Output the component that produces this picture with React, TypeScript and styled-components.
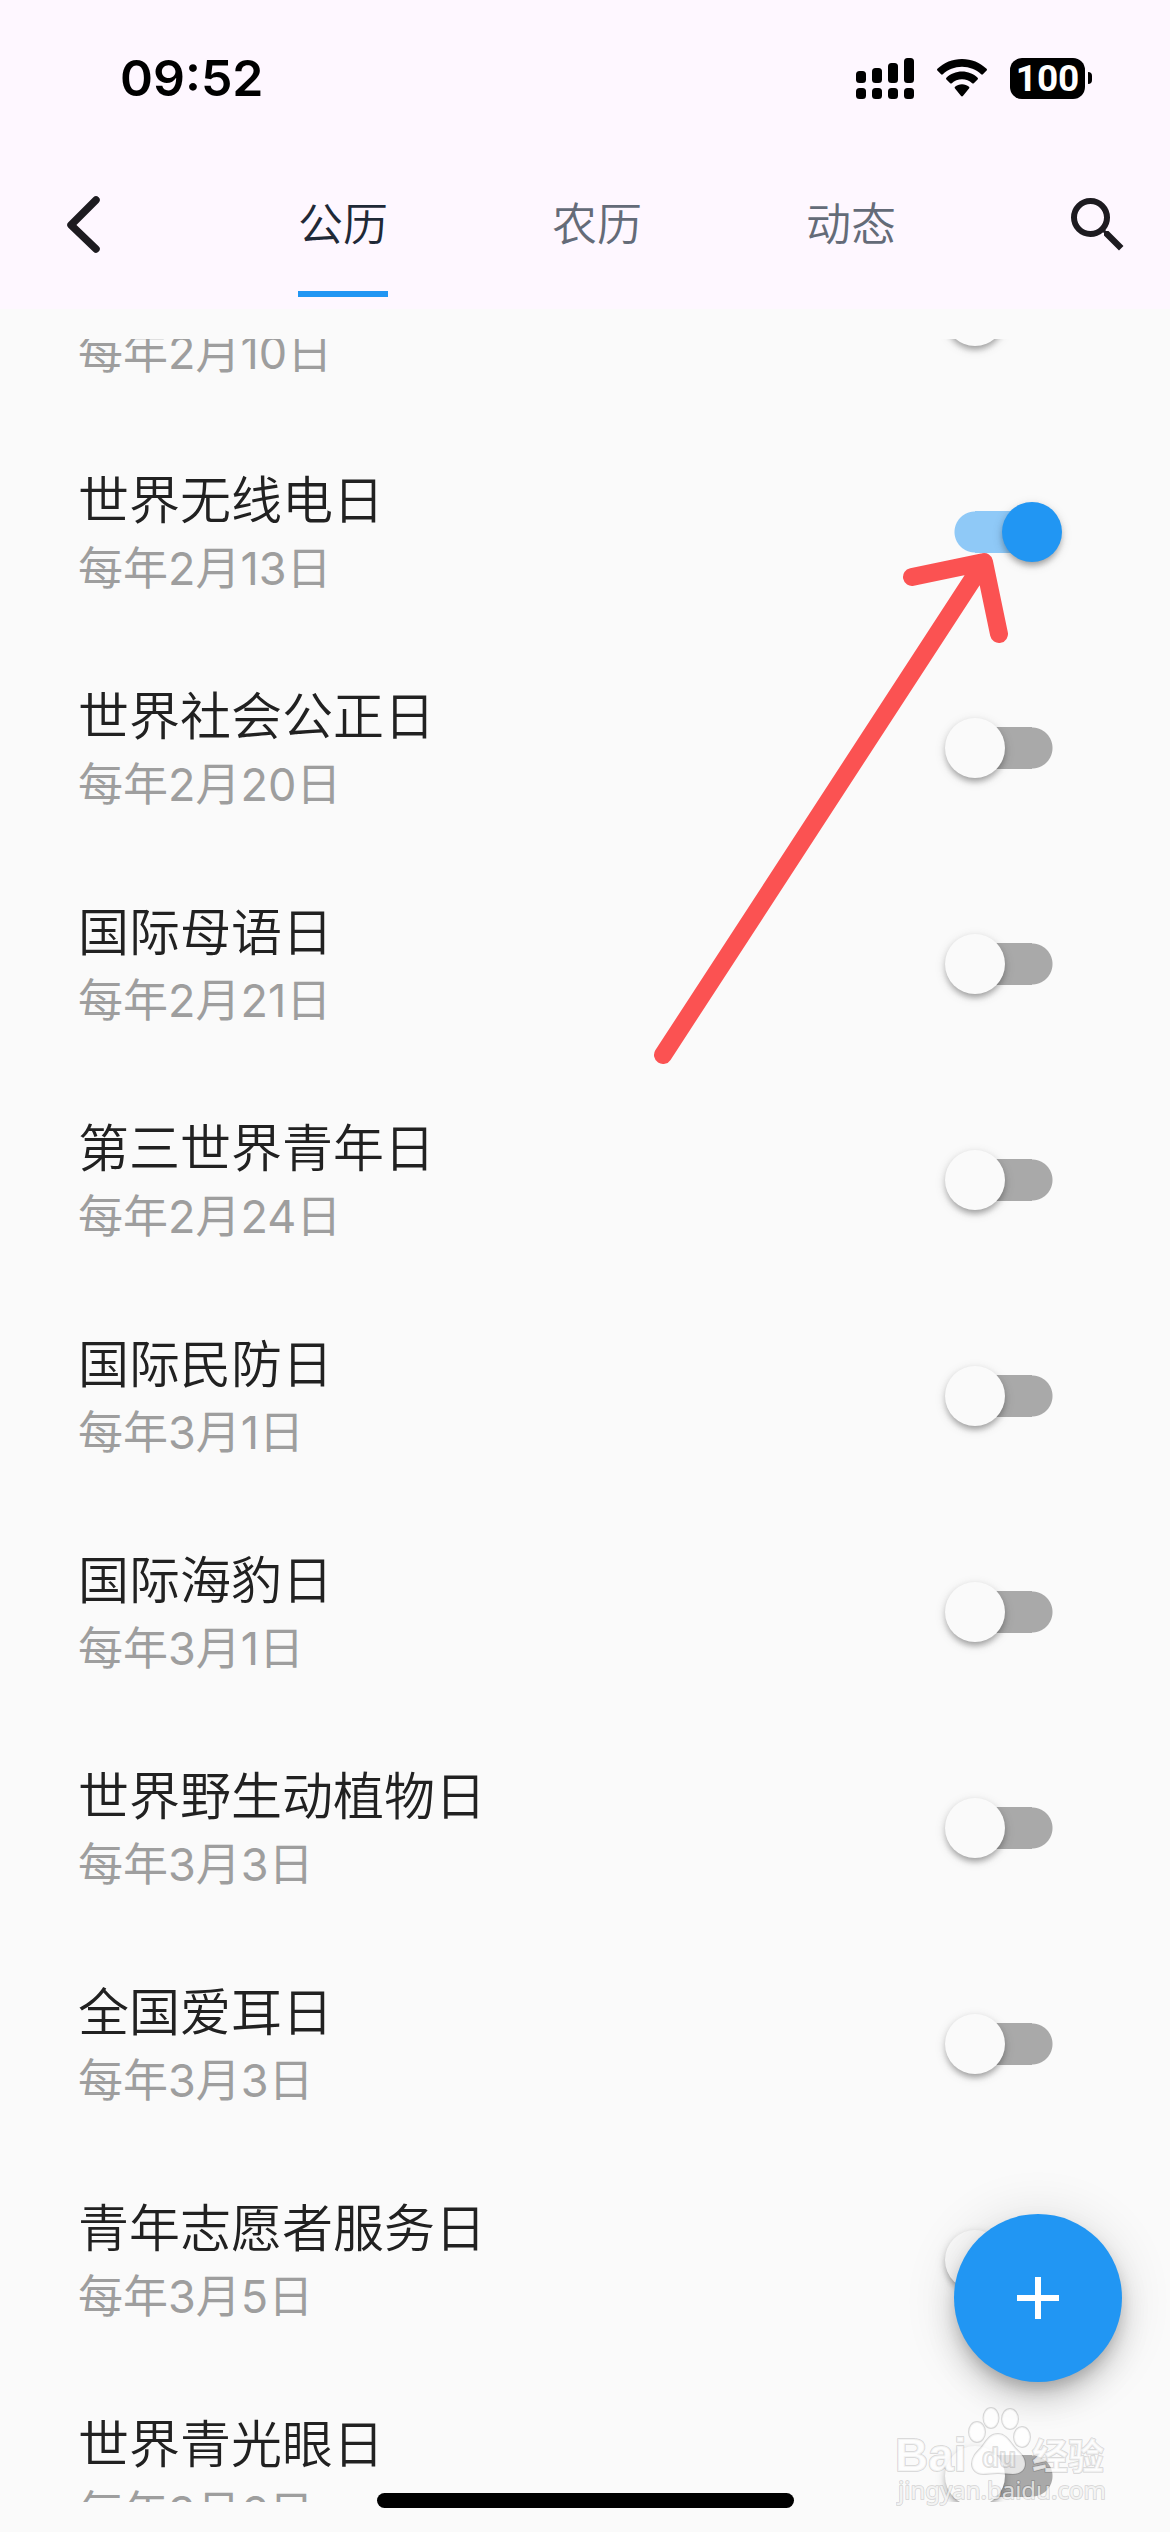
import React, { useLayoutEffect, useRef, useState } from "react";
import styled, { createGlobalStyle } from "styled-components";

const GlobalStyle = createGlobalStyle`
  *, *::before, *::after { box-sizing: border-box; }
  body {
    margin: 0;
    background: #fafafa;
    font-family: Inter, "Noto Sans CJK SC", sans-serif;
    font-weight: 350;
  }
  button { font: inherit; border: 0; padding: 0; background: none; cursor: pointer; }
`;

const Screen = styled.div`
  position: relative;
  display: flex;
  flex-direction: column;
  height: 100vh;
  overflow: hidden;
  background: #fafafa;
`;

const Header = styled.header`
  background: #fef7ff;
`;

const StatusBar = styled.div`
  display: flex;
  align-items: center;
  justify-content: space-between;
  height: 141px;
  padding: 15px 78px 0 120px;
  color: #000;
`;

const Clock = styled.time`
  font-size: 50px;
  font-weight: 600;
  line-height: 60px;
`;

const StatusIcons = styled.div`
  display: flex;
  align-items: center;
  gap: 23px;
`;

const Battery = styled.div`
  display: flex;
  align-items: center;
  gap: 3px;
`;

const BatteryBody = styled.div`
  width: 75px;
  height: 41px;
  border-radius: 12px;
  background: #000;
  color: #fff;
  font-family: Roboto, sans-serif;
  font-size: 37px;
  font-weight: 700;
  line-height: 41px;
  text-align: center;
`;

const BatteryTip = styled.div`
  width: 4px;
  height: 12px;
  border-radius: 0 4px 4px 0;
  background: #000;
`;

const Toolbar = styled.div`
  display: flex;
  align-items: center;
  height: 168px;
`;

const IconButton = styled.button<{ $width: number }>`
  display: grid;
  place-items: center;
  flex: none;
  width: ${(p) => p.$width}px;
  height: 144px;
  color: #1d1b20;
`;

const Tabs = styled.nav`
  display: flex;
  flex: 1;
  margin: 0 48px;
`;

const Tab = styled.button<{ $active: boolean }>`
  display: flex;
  flex: 1;
  justify-content: center;
  height: 144px;
  font-size: 45px;
  line-height: 138px;
  color: ${(p) => (p.$active ? "#1f2937" : "#646b78")};

  span {
    padding-top: 3px;
    height: 144px;
    border-bottom: 6px solid ${(p) => (p.$active ? "#2196f3" : "transparent")};
  }
`;

const Body = styled.main`
  flex: 1;
  min-height: 0;
  padding: 30px 0;
`;

const List = styled.ul`
  height: 100%;
  margin: 0;
  padding: 0;
  list-style: none;
  overflow-y: auto;
  scrollbar-width: none;
`;

const Row = styled.li`
  display: flex;
  align-items: center;
  justify-content: space-between;
  height: 216px;
  padding: 0 108px 0 78px;
`;

const Label = styled.label`
  display: flex;
  flex-direction: column;
`;

const Title = styled.span`
  font-size: 51px;
  line-height: 72px;
  color: #212121;
`;

const Subtitle = styled.span`
  font-size: 45px;
  font-weight: 400;
  line-height: 63px;
  color: #9e9e9e;
`;

const Switch = styled.input`
  appearance: none;
  display: flex;
  align-items: center;
  flex: none;
  width: 117px;
  height: 60px;
  margin: 0;
  cursor: pointer;
  background: linear-gradient(#a9a9a9, #a9a9a9) center / 57px 42px no-repeat,
    radial-gradient(circle 21px at 30px 30px, #a9a9a9 20px, transparent 21px),
    radial-gradient(circle 21px at 87px 30px, #a9a9a9 20px, transparent 21px);

  &::before {
    content: "";
    width: 60px;
    height: 60px;
    border-radius: 50%;
    background: #fafafa;
    box-shadow: 0 6px 6px -3px rgba(0, 0, 0, 0.2), 0 3px 6px rgba(0, 0, 0, 0.14),
      0 3px 12px rgba(0, 0, 0, 0.12);
  }

  &:checked {
    justify-content: flex-end;
    background: linear-gradient(#8fc9f7, #8fc9f7) center / 57px 42px no-repeat,
      radial-gradient(circle 21px at 30px 30px, #8fc9f7 20px, transparent 21px),
      radial-gradient(circle 21px at 87px 30px, #8fc9f7 20px, transparent 21px);
  }

  &:checked::before {
    background: #2196f3;
  }
`;

const AddButton = styled.button`
  position: absolute;
  right: 48px;
  bottom: 150px;
  display: grid;
  place-items: center;
  width: 168px;
  height: 168px;
  border-radius: 50%;
  background: #2196f3;
  box-shadow: 0 9px 15px -3px rgba(0, 0, 0, 0.2), 0 18px 30px rgba(0, 0, 0, 0.14),
    0 3px 54px rgba(0, 0, 0, 0.12);
`;

const HomeIndicator = styled.div`
  position: absolute;
  bottom: 24px;
  left: 50%;
  width: 417px;
  height: 15px;
  margin-left: -208px;
  border-radius: 8px;
  background: #000;
`;

const Pointer = styled.svg`
  position: absolute;
  top: 550px;
  right: 160px;
  pointer-events: none;
`;

const Watermark = styled.svg`
  position: absolute;
  right: 60px;
  bottom: 22px;
  pointer-events: none;
  fill: rgba(255, 255, 255, 0.7);
  stroke: rgba(0, 0, 0, 0.14);
  stroke-width: 2px;
  stroke-linejoin: round;
  font-family: "Liberation Sans", "Noto Sans CJK SC", sans-serif;
  font-weight: 700;

  .brand { font-size: 46px; }
  .mark { font-size: 28px; fill: rgba(255, 255, 255, 0.3); }
  .section { font-size: 36px; }
  .address { font-family: "Noto Sans", sans-serif; font-size: 24px; font-weight: 400; }
`;

const tabs = ["公历", "农历", "动态"];

const festivals = [
  { title: "国际气象节", date: "每年2月10日" },
  { title: "世界无线电日", date: "每年2月13日", on: true },
  { title: "世界社会公正日", date: "每年2月20日" },
  { title: "国际母语日", date: "每年2月21日" },
  { title: "第三世界青年日", date: "每年2月24日" },
  { title: "国际民防日", date: "每年3月1日" },
  { title: "国际海豹日", date: "每年3月1日" },
  { title: "世界野生动植物日", date: "每年3月3日" },
  { title: "全国爱耳日", date: "每年3月3日" },
  { title: "青年志愿者服务日", date: "每年3月5日" },
  { title: "世界青光眼日", date: "每年3月6日" },
];

const signalTops = [13, 10, 5, 0];

function SignalIcon() {
  return (
    <svg width="58" height="41" viewBox="0 0 58 41" aria-hidden="true">
      {signalTops.map((top, i) => (
        <g key={top}>
          <rect x={i * 16} y={top} width="10" height={25 - top} rx="3.5" />
          <rect x={i * 16} y="30" width="10" height="11" rx="3.5" />
        </g>
      ))}
    </svg>
  );
}

function WifiIcon() {
  return (
    <svg width="50" height="38" viewBox="0 0 50 38" aria-hidden="true">
      <path d="M25 0C15.500 0 6.800 3.700 .400 9.800c-.500.500-.500 1.200 0 1.700l3.700 3.800c.500.500 1.200.500 1.700 0C10.900 10.600 17.600 7.800 25 7.800s14.100 2.800 19.200 7.500c.500.500 1.200.500 1.700 0l3.700-3.800c.500-.500.500-1.200 0-1.700C43.200 3.700 34.500 0 25 0z" />
      <path d="M25 12.600c-6 0-11.500 2.300-15.600 6.100-.500.500-.500 1.200 0 1.700l3.800 3.800c.500.500 1.200.500 1.600 0 2.700-2.400 6.300-3.900 10.200-3.900s7.500 1.500 10.200 3.900c.500.500 1.200.500 1.600 0l3.800-3.800c.500-.500.500-1.200 0-1.700-4.100-3.800-9.600-6.100-15.600-6.100z" />
      <path d="M25 25.200c-2.700 0-5.100.900-7 2.500-.500.500-.500 1.200 0 1.700l6.100 7.700c.500.600 1.300.600 1.800 0l6.100-7.700c.500-.500.500-1.200 0-1.700-1.900-1.600-4.300-2.500-7-2.500z" />
    </svg>
  );
}

function FestivalRow({ id, title, date, on }: { id: string; title: string; date: string; on?: boolean }) {
  const [checked, setChecked] = useState(Boolean(on));
  return (
    <Row>
      <Label htmlFor={id}>
        <Title>{title}</Title>
        <Subtitle>{date}</Subtitle>
      </Label>
      <Switch id={id} type="checkbox" checked={checked} onChange={() => setChecked(!checked)} />
    </Row>
  );
}

export default function App() {
  const [active, setActive] = useState(0);
  const list = useRef<HTMLUListElement>(null);

  // The list opens part of the way down its first entry.
  useLayoutEffect(() => {
    if (list.current) list.current.scrollTop = 131;
  }, []);

  return (
    <Screen>
      <GlobalStyle />
      <Header>
        <StatusBar>
          <Clock>09:52</Clock>
          <StatusIcons>
            <SignalIcon />
            <WifiIcon />
            <Battery>
              <BatteryBody>100</BatteryBody>
              <BatteryTip />
            </Battery>
          </StatusIcons>
        </StatusBar>
        <Toolbar>
          <IconButton $width={168} aria-label="返回">
            <svg width="72" height="72" viewBox="0 0 72 72" fill="none" stroke="currentColor" strokeWidth="7.500" strokeLinecap="round" strokeLinejoin="round" aria-hidden="true">
              <path d="M48 11 23 36l25 24" />
            </svg>
          </IconButton>
          <Tabs>
            {tabs.map((name, i) => (
              <Tab key={name} $active={i === active} onClick={() => setActive(i)}>
                <span>{name}</span>
              </Tab>
            ))}
          </Tabs>
          <IconButton $width={144} aria-label="搜索">
            <svg width="72" height="72" viewBox="0 0 24 24" fill="currentColor" aria-hidden="true">
              <path d="M15.500 14h-.790l-.280-.270A6.471 6.471 0 0 0 16 9.500 6.500 6.500 0 1 0 9.500 16c1.610 0 3.090-.590 4.230-1.570l.270.280v.790l5 4.990L20.490 19l-4.990-5zm-6 0C7.010 14 5 11.990 5 9.500S7.010 5 9.500 5 14 7.010 14 9.500 11.990 14 9.500 14z" />
            </svg>
          </IconButton>
        </Toolbar>
      </Header>
      <Body>
        <List ref={list}>
          {festivals.map((f, i) => (
            <FestivalRow key={f.title} id={`festival-${i}`} {...f} />
          ))}
          <Row />
        </List>
      </Body>
      <AddButton aria-label="添加">
        <svg width="42" height="42" viewBox="0 0 42 42" stroke="#fff" strokeWidth="6" aria-hidden="true">
          <path d="M21 0v42M0 21h42" />
        </svg>
      </AddButton>
      <HomeIndicator />
      <Pointer width="360" height="516" viewBox="0 0 360 516" fill="none" stroke="#fb5252" strokeWidth="18" strokeLinecap="round" strokeLinejoin="round" aria-hidden="true">
        <path d="M13 505 334 12M262 27l72-15 15 72" />
      </Pointer>
      <Watermark width="214" height="104" viewBox="0 0 214 104" paintOrder="stroke">
        <ellipse cx="81" cy="26" rx="8" ry="10" />
        <ellipse cx="95" cy="12" rx="7.500" ry="10" />
        <ellipse cx="114" cy="13" rx="8" ry="10" />
        <ellipse cx="126" cy="31" rx="8" ry="10" />
        <path d="M102 28c-9 0-12 8-17 14-5 5-9 9-9 16 0 6 5 10 11 10 5 0 10-1 15-1s10 1 15 1c7 0 12-4 12-10 0-7-5-11-10-16-5-6-9-14-17-14z" />
        <text className="brand" x="-1" y="65">Bai</text>
        <text className="mark" x="86" y="61">du</text>
        <text className="section" x="136" y="64">经验</text>
        <text className="address" x="2" y="93">jingyan.baidu.com</text>
      </Watermark>
    </Screen>
  );
}
